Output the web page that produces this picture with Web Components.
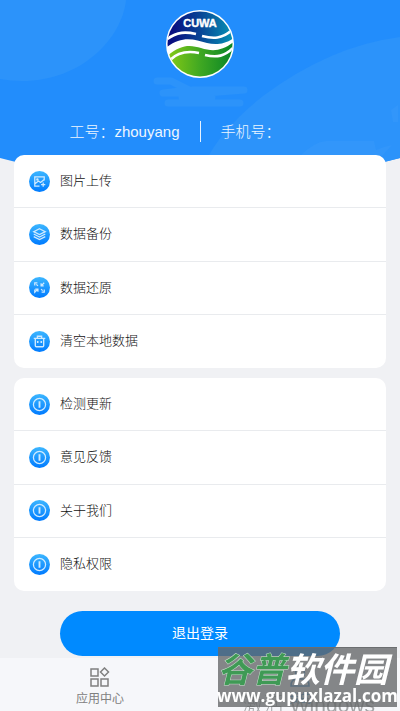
<!DOCTYPE html>
<html lang="zh-CN">
<head>
<meta charset="utf-8">
<meta name="viewport" content="width=device-width, initial-scale=1">
<title>我的</title>
<style>
body{
    margin: 0;
    background-color: #f0f1f4;
    font-family: "Liberation Sans", "Noto Sans CJK SC", sans-serif;
    font-weight: 300;
    color: #333;
}
</style>
</head>
<body>

<profile-page>
    <profile-header slot="header">
        <span slot="number">工号：zhouyang</span>
        <span slot="phone">手机号：</span>
    </profile-header>

    <menu-card>
        <menu-item icon="upload">图片上传</menu-item>
        <menu-item icon="layers">数据备份</menu-item>
        <menu-item icon="restore">数据还原</menu-item>
        <menu-item icon="trash">清空本地数据</menu-item>
    </menu-card>
    <menu-card>
        <menu-item icon="info">检测更新</menu-item>
        <menu-item icon="info">意见反馈</menu-item>
        <menu-item icon="info">关于我们</menu-item>
        <menu-item icon="info">隐私权限</menu-item>
    </menu-card>
    <logout-button>退出登录</logout-button>

    <tab-bar slot="tabs">
        <tab-link icon="apps">应用中心</tab-link>
        <tab-link icon="user" active>我的</tab-link>
    </tab-bar>
</profile-page>
<activate-note>激活 Windows</activate-note>
<site-mark>
    <span slot="green">谷普</span>
    <span slot="white">软件园</span>
    <span slot="url">www.gupuxlazal.com</span>
</site-mark>

<script>
// attach an open shadow root filled with the given markup
function fill(el, html){
    const template = document.createElement("template");
    template.innerHTML = html;
    el.attachShadow({mode: "open"}).appendChild(template.content.cloneNode(true));
}

const menuIcons = {
    upload: `<path d="M14.500 9V5.500h-9v9h4.500M6 12l3-2.500 2 1.500 3.500-3M13.500 11v4M11.500 13h4"/><circle cx="8" cy="8" r=".6"/>`,
    layers: `<path d="M10 4.500l5.500 2.800-5.500 2.800-5.500-2.800zM4.500 9.500l5.500 2.900 5.500-2.900M4.500 12l5.500 2.900 5.500-2.900"/>`,
    restore: `<path d="M5.500 8V5.500H8M12 14.500h2.500V12M5.500 12v2.500l3-3M6 11.500h2.500V14M14.500 5.500l-3 3M11.500 6v2.500H14M7 7l1.500 1.500M11.500 11.500l1.500 1.500"/>`,
    trash: `<path stroke-width="1.300" d="M4.500 7h11M8 7V5h4v2M6 7v7q0 1 1 1h6q1 0 1-1V7"/><path stroke-width="1.500" d="M8.300 9.500v2M11.700 9.500v2"/>`,
    info: `<circle cx="10" cy="10" r="5.800"/><path d="M10 7v6" stroke-width="1.800"/>`
};

const tabIcons = {
    apps: `<path d="M1 2h7v7H1zM1 12h7v7H1zM11 12h7v7h-7zM14.500 1l4 4-4 4-4-4z"/>`,
    user: `<circle cx="10" cy="6" r="4.500"/><path d="M1 19q0-7 6-7h6q6 0 6 7z"/>`
};

class ProfilePage extends HTMLElement {
    constructor(){
        super();
        fill(this, `
<style>
:host{
    display: flex;
    flex-direction: column;
    min-height: 100vh;
}

main{
    display: flex;
    flex-direction: column;
    gap: 10px;
    padding: 0 14px;
    margin-top: -8px;
    position: relative;
}

::slotted([slot="tabs"]){ margin-top: auto; }
</style>
<slot name="header"></slot>
<main><slot></slot></main>
<slot name="tabs"></slot>
`);
    }
}

class ProfileHeader extends HTMLElement {
    constructor(){
        super();
        fill(this, `
<style>
:host{
    display: grid;
    color: #edf6ff;
}

.bg, .content{ grid-area: 1 / 1; }

.bg{
    width: 100%;
    height: 100%;
}

.content{
    display: flex;
    flex-direction: column;
    align-items: center;
    padding: 9px 0 20px;
}

.logo{
    width: 70px;
    height: 70px;
}

.smudge{
    width: 96px;
    height: 32px;
    margin: -3px 0 13px;
}

.info{
    display: grid;
    grid-template-columns: 1fr 1px 1fr;
    column-gap: 20px;
    align-self: stretch;
    font-size: 15px;
    line-height: 21px;
}

.info slot{ display: block; }
.number{ text-align: right; }
.line{ background-color: #e6f2ff; }
</style>
<svg class="bg" viewBox="0 0 400 163" preserveAspectRatio="none" aria-hidden="true">
    <defs><clipPath id="bow"><path d="M0 0H400V158Q200 210 0 158z"/></clipPath></defs>
    <g clip-path="url(#bow)">
        <rect width="400" height="163" fill="#228dfc"/>
        <path d="M0 0H126C122 38 82 81 22 81Q10 81 0 79z" fill="#2c93fa"/>
        <path d="M205 163Q220 130 263 96Q330 46 400 37V163z" fill="#2c93fa"/>
        <path d="M300 156q14-14 26-15h48l2 9 8-3 8-2-10 11z" fill="#3296fa"/>
        <path d="M391 110l7-5v17h-5z" fill="#3296fa"/>
    </g>
</svg>
<div class="content">
    <svg class="logo" viewBox="0 0 70 70" role="img" aria-label="CUWA">
        <defs>
            <linearGradient id="sea"><stop offset=".1" stop-color="#090e80"/><stop offset=".5" stop-color="#084495"/><stop offset="1" stop-color="#0898b8"/></linearGradient>
            <linearGradient id="land"><stop offset="0" stop-color="#8ccd14"/><stop offset=".5" stop-color="#40a822"/><stop offset="1" stop-color="#058326"/></linearGradient>
            <clipPath id="disc"><circle cx="35" cy="35" r="32.500"/></clipPath>
        </defs>
        <circle cx="35" cy="35" r="34" fill="#fff"/>
        <g clip-path="url(#disc)">
            <path d="M0 0h70v28C60 36 50 36 42 34C30 31 18 26 2 38z" fill="url(#sea)"/>
            <path d="M0 49C16 34 26 36 36 39C48 43 58 42 70 32V70H0z" fill="url(#land)"/>
            <path d="M1 31C12 22 22 23 31 25M37 27C48 30 57 30 67 21M5 51C14 42 24 42 34 44M40 46C52 49 60 47 68 39" fill="none" stroke="#fff" stroke-width="2.600"/>
        </g>
        <text x="35" y="18" text-anchor="middle" font-family="Liberation Sans, sans-serif" font-weight="bold" font-size="11" fill="#fff" stroke="#fff" stroke-width=".4">CUWA</text>
    </svg>
    <svg class="smudge" viewBox="0 0 96 32" fill="none" stroke="#2c93fa" stroke-width="7" stroke-linecap="round" stroke-linejoin="round" aria-hidden="true">
        <path d="M5 5h14l18 9-26 3h44l37-3H40M16 27h72M30 21h30"/>
    </svg>
    <div class="info">
        <slot class="number" name="number"></slot>
        <span class="line"></span>
        <slot name="phone"></slot>
    </div>
</div>
`);
    }
}

class MenuCard extends HTMLElement {
    constructor(){
        super();
        fill(this, `
<style>
:host{
    display: grid;
    grid-auto-rows: 1fr;
    min-height: 213px;
    border-radius: 10px;
    overflow: hidden;
    background-color: #fff;
}

::slotted(:not(:last-child)){ border-bottom: 1px solid #e9ebee; }
</style>
<slot></slot>
`);
    }
}

class MenuItem extends HTMLElement {
    constructor(){
        super();
        fill(this, `
<style>
:host{ display: grid; }

button{
    display: flex;
    align-items: center;
    gap: 10px;
    padding: 0 15px;
    border: 0;
    background: transparent;
    font: inherit;
    font-size: 13px;
    line-height: 20px;
    color: #111;
    cursor: pointer;
}

svg{
    width: 21px;
    height: 21px;
}
</style>
<button type="button">
    <svg viewBox="0 0 20 20" aria-hidden="true">
        <defs><linearGradient id="g" x2="0" y2="1"><stop stop-color="#3cb6ff"/><stop offset="1" stop-color="#007bff"/></linearGradient></defs>
        <circle cx="10" cy="10" r="10" fill="url(#g)"/>
        <g fill="none" stroke="#cfeaff" stroke-width="1.200">${menuIcons[this.getAttribute("icon")]}</g>
    </svg>
    <slot></slot>
</button>
`);
    }
}

class LogoutButton extends HTMLElement {
    constructor(){
        super();
        fill(this, `
<style>
:host{
    display: grid;
    margin: 10px 46px 2px;
}

button{
    height: 45px;
    padding: 0 0 3px;
    border: 0;
    border-radius: 23px;
    background-color: #008aff;
    color: #fff;
    font: inherit;
    font-size: 14px;
    font-weight: 400;
    cursor: pointer;
}
</style>
<button type="button"><slot></slot></button>
`);
    }
}

class TabBar extends HTMLElement {
    constructor(){
        super();
        fill(this, `
<style>
:host{ display: block; }

nav{
    display: grid;
    grid-template-columns: 1fr 1fr;
    background-color: #f6f7fa;
}
</style>
<nav><slot></slot></nav>
`);
    }
}

class TabLink extends HTMLElement {
    constructor(){
        super();
        fill(this, `
<style>
:host{
    display: grid;
    color: #808080;
}
:host([active]){ color: #3f8fce; }

a{
    display: flex;
    flex-direction: column;
    align-items: center;
    gap: 3px;
    padding: 9px 0 4px;
    color: inherit;
    text-decoration: none;
    font-size: 12px;
    font-weight: 400;
    line-height: 18px;
}

svg{
    width: 20px;
    height: 20px;
}
</style>
<a href="#">
    <svg viewBox="0 0 20 20" fill="none" stroke="currentColor" stroke-width="1.500" aria-hidden="true">${tabIcons[this.getAttribute("icon")]}</svg>
    <slot></slot>
</a>
`);
    }
}

class ActivateNote extends HTMLElement {
    constructor(){
        super();
        fill(this, `
<style>
:host{
    position: fixed;
    right: 25px;
    bottom: -8px;
    font-size: 21px;
    line-height: 28px;
    color: #a2a4a6;
    pointer-events: none;
}
</style>
<slot></slot>
`);
    }
}

class SiteMark extends HTMLElement {
    constructor(){
        super();
        fill(this, `
<style>
:host{
    position: fixed;
    right: 3px;
    bottom: 4px;
    width: 179px;
    height: 60px;
    box-sizing: border-box;
    border-top: 1px solid #6b6e70;
    background-color: rgba(100, 102, 104, 0.78);
    color: #fff;
    font-weight: bold;
    white-space: nowrap;
    pointer-events: none;
}

.name{
    display: flex;
    height: 38px;
    font-family: "Noto Sans CJK SC", sans-serif;
    font-size: 34px;
    font-style: italic;
    line-height: 40px;
}

.green{
    color: #3f9a55;
    -webkit-text-stroke: 1px #c4dfca;
    paint-order: stroke fill;
}

.url{
    display: flex;
    justify-content: center;
    font-family: "Open Sans", sans-serif;
    font-size: 17px;
    line-height: 20px;
}
</style>
<div class="name"><span class="green"><slot name="green"></slot></span><slot name="white"></slot></div>
<div class="url"><slot name="url"></slot></div>
`);
    }
}

customElements.define("profile-page", ProfilePage);
customElements.define("profile-header", ProfileHeader);
customElements.define("menu-card", MenuCard);
customElements.define("menu-item", MenuItem);
customElements.define("logout-button", LogoutButton);
customElements.define("tab-bar", TabBar);
customElements.define("tab-link", TabLink);
customElements.define("activate-note", ActivateNote);
customElements.define("site-mark", SiteMark);
</script>
</body>
</html>
